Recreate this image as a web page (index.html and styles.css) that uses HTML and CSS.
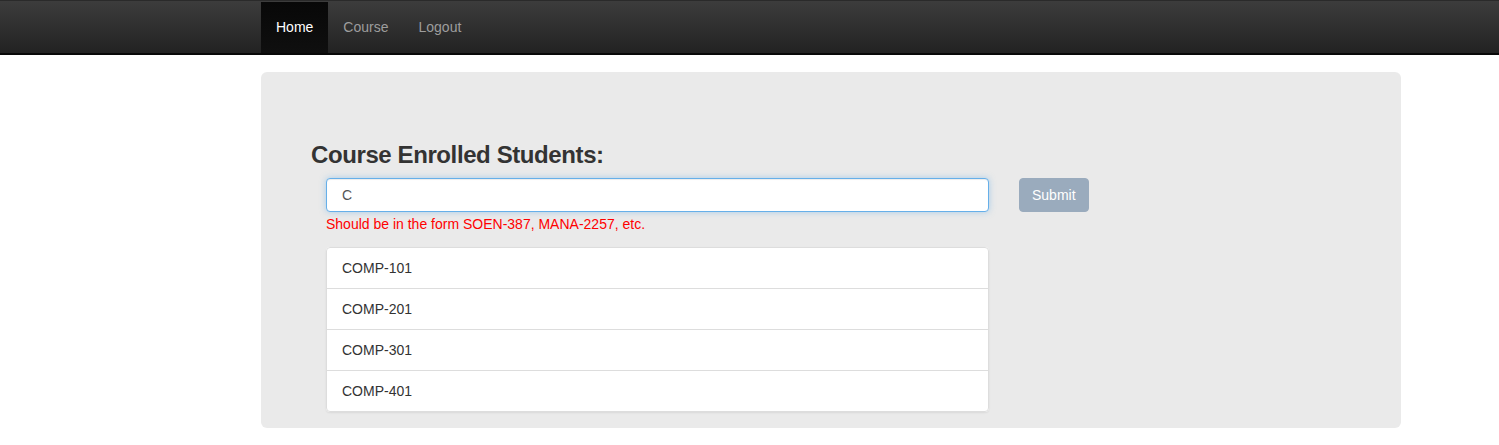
FILE: index.html
```html
<!DOCTYPE html>
<html>
<head>
<meta charset="utf-8">
<link rel="stylesheet" href="styles.css">
</head>
<body>
<nav class="navbar">
  <div class="container">
    <ul class="nav">
      <li class="active"><a href="#">Home</a></li>
      <li><a href="#">Course</a></li>
      <li><a href="#">Logout</a></li>
    </ul>
  </div>
</nav>
<div class="container">
  <div class="jumbotron">
    <h3 class="title">Course Enrolled Students:</h3>
    <div class="form-row">
      <div class="field">
        <input class="form-control" type="text" value="C">
        <div class="error">Should be in the form SOEN-387, MANA-2257, etc.</div>
        <ul class="list-group">
          <li class="list-item">COMP-101</li>
          <li class="list-item">COMP-201</li>
          <li class="list-item">COMP-301</li>
          <li class="list-item">COMP-401</li>
        </ul>
      </div>
      <button class="btn" disabled>Submit</button>
    </div>
  </div>
</div>
</body>
</html>
```
FILE: styles.css
```css
* { box-sizing: border-box; }
html, body { margin: 0; padding: 0; }
body {
  font-family: "Liberation Sans", Arial, Helvetica, sans-serif;
  font-size: 14px;
  line-height: 1.42857;
  color: #333;
  background: #fff;
}
.navbar {
  background: linear-gradient(to bottom, #3c3c3c 0, #222 100%);
  border-top: 1px solid #2a2a2a;
  border-bottom: 2px solid #080808;
  padding-top: 1px;
  margin-bottom: 17px;
}
.container {
  width: 1140px;
  margin-left: 261px;
}
.nav {
  list-style: none;
  margin: 0;
  padding: 0;
  display: flex;
  height: 51px;
}
.nav li a {
  display: block;
  height: 51px;
  padding: 0 15px;
  line-height: 51px;
  color: #9d9d9d;
  text-decoration: none;
  font-size: 14px;
}
.nav li.active a {
  color: #fff;
  background: linear-gradient(to bottom, #080808 0, #0f0f0f 100%);
}
.jumbotron {
  background: #eaeaea;
  border-radius: 6px;
  padding: 70px 50px 16px 50px;
}
.title {
  margin: 0 0 10px 0;
  font-size: 24px;
  font-weight: 700;
  letter-spacing: -0.4px;
  line-height: 1.1;
  color: #333;
}
.form-row {
  display: flex;
  align-items: flex-start;
  gap: 30px;
  padding-left: 15px;
}
.field {
  width: 663px;
}
.form-control {
  display: block;
  width: 100%;
  height: 34px;
  padding: 6px 15px;
  font-family: inherit;
  font-size: 14px;
  color: #555;
  background: #fff;
  border: 1px solid #66afe9;
  border-radius: 4px;
  outline: 0;
  box-shadow: inset 0 1px 1px rgba(0,0,0,.075), 0 0 6px rgba(102,175,233,.5);
}
.error {
  color: #f00;
  font-size: 14px;
  line-height: 20px;
  margin-top: 2px;
}
.list-group {
  list-style: none;
  margin: 13px 0 0 0;
  padding: 0;
  border-radius: 4px;
  box-shadow: 0 1px 2px rgba(0,0,0,.075);
  background: #fff;
}
.list-item {
  padding: 10px 15px;
  border: 1px solid #ddd;
  margin-bottom: -1px;
  line-height: 20px;
  color: #333;
}
.list-item:first-child { border-top-left-radius: 4px; border-top-right-radius: 4px; }
.list-item:last-child { margin-bottom: 0; border-bottom-left-radius: 4px; border-bottom-right-radius: 4px; }
.btn {
  height: 34px;
  padding: 6px 12px;
  font-family: inherit;
  font-size: 14px;
  line-height: 20px;
  color: #fff;
  background: #9aabbd;
  border: 1px solid #9aabbd;
  border-radius: 4px;
  cursor: not-allowed;
}
```
